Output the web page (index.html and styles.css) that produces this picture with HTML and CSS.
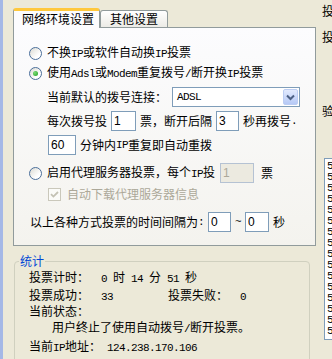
FILE: index.html
```html
<!DOCTYPE html>
<html lang="zh">
<head>
    <meta charset="UTF-8">
    <meta name="viewport" content="width=device-width, initial-scale=1.0">
    <title>投票设置</title>
    <link rel="stylesheet" href="styles.css">
</head>
<body>
    <div class="window">
        <div class="main">
            <div class="tabs">
                <div class="tab active">网络环境设置</div>
                <div class="tab">其他设置</div>
            </div>

            <div class="panel">
                <div class="row">
                    <span class="radio"></span>
                    <span class="label">不换<span class="en">IP</span>或软件自动换<span class="en">IP</span>投票</span>
                </div>
                <div class="row">
                    <span class="radio on"></span>
                    <span class="label">使用<span class="en">Adsl</span>或<span class="en">Modem</span>重复拨号<span class="en">/</span>断开换<span class="en">IP</span>投票</span>
                </div>
                <div class="row indent gap4">
                    当前默认的拨号连接：
                    <div class="combo">
                        <span class="combo-text en">ADSL</span>
                        <span class="combo-btn">
                            <svg width="9" height="7" viewBox="0 0 9 7"><path d="M1 1.5 L4.5 5 L8 1.5" fill="none" stroke="#4D6185" stroke-width="2"/></svg>
                        </span>
                    </div>
                </div>
                <div class="row indent gap4">
                    每次拨号投<input class="num w25" type="text" value="1">票，断开后隔<input class="num w23" type="text" value="3">秒再拨号<span class="en">.</span>
                </div>
                <div class="row indent gap4 minutes">
                    <input class="num w28" type="text" value="60">分钟内<span class="en">IP</span>重复即自动重拨
                </div>
                <div class="row gap8">
                    <span class="radio"></span>
                    <span class="label">启用代理服务器投票，每个<span class="en">IP</span>投</span>
                    <input class="num w34" type="text" value="1" disabled>
                    <span class="after-proxy">票</span>
                </div>
                <div class="row indent gap1 disabled">
                    <span class="check">
                        <svg width="9" height="9" viewBox="0 0 9 9"><path d="M1 4.2 L3.4 6.6 L8 2" fill="none" stroke="#C4C2B4" stroke-width="1.8"/></svg>
                    </span>
                    <span class="label">自动下载代理服务器信息</span>
                </div>
                <div class="row gap8 interval">
                    以上各种方式投票的时间间隔为<span class="en">:</span><input class="num w23" type="text" value="0"><span class="en">~</span><input class="num w24" type="text" value="0">秒
                </div>
            </div>

            <fieldset class="stats">
                <legend>统计</legend>
                <div class="stat-line first">投票计时：<span class="en">  0 </span>时<span class="en"> 14 </span>分<span class="en"> 51 </span>秒</div>
                <div class="stat-line pair"><span class="stat-cell">投票成功：<span class="en">  33</span></span><span>投票失败：<span class="en">  0</span></span></div>
                <div class="stat-line">当前状态：</div>
                <div class="stat-line message">用户终止了使用自动拨号<span class="en">/</span>断开投票。</div>
                <div class="stat-line last">当前<span class="en">IP</span>地址：<span class="en"> 124.238.170.106</span></div>
            </fieldset>
        </div>

        <div class="side">
            <div class="side-label s1">投票网址：</div>
            <div class="side-label s2">投票参数：</div>
            <div class="side-label s3">验证码：</div>
            <div class="list en">
                <div>58.61.32.4</div>
                <div>58.61.32.5</div>
                <div>58.61.32.6</div>
                <div>58.61.32.7</div>
                <div>58.61.32.8</div>
                <div>58.61.33.1</div>
                <div>58.61.33.2</div>
                <div>58.61.33.3</div>
                <div>58.61.33.4</div>
                <div>58.61.33.5</div>
                <div>58.61.33.6</div>
                <div>58.61.33.7</div>
                <div>58.61.33.8</div>
                <div>58.61.34.1</div>
                <div>58.61.34.2</div>
                <div>58.61.34.3</div>
            </div>
        </div>
    </div>
</body>
</html>
```

FILE: styles.css
```css
html, body {
    margin: 0;
    height: 100%;
}

body {
    background: #ECE9D8;
    font: 12px "Noto Sans CJK SC", sans-serif;
    color: #000;
    overflow: hidden;
}

.en {
    font-family: "Liberation Mono", monospace;
    font-size: 11px;
    letter-spacing: -0.6px;
}

.window {
    display: flex;
    height: 359px;
    border-left: 3px solid #A5B8E6;
}

.main {
    flex: none;
    width: 303px;
    padding-left: 10px;
}

/* tabs */
.tabs {
    display: flex;
    height: 19px;
    margin-top: 8px;
}

.tab {
    box-sizing: border-box;
    height: 17px;
    margin-top: 2px;
    padding: 0 9px;
    border: 1px solid #919B9C;
    border-bottom: none;
    border-radius: 3px 3px 0 0;
    background: linear-gradient(#FFFFFF, #ECEBE6);
    line-height: 15px;
    white-space: nowrap;
}

.tab.active {
    position: relative;
    z-index: 1;
    height: 20px;
    margin-top: 0;
    padding: 0 5px 0 8px;
    border-top: 3px solid #FFC83C;
    background: #FCFCFE;
}

.panel {
    box-sizing: border-box;
    height: 219px;
    padding: 15px 0 0 15px;
    border: 1px solid #919B9C;
    background: linear-gradient(#FCFCFE, #F4F3EE);
}

.row {
    display: flex;
    align-items: center;
    height: 20px;
    line-height: 16px;
    white-space: nowrap;
}

.gap1 { margin-top: 1px; }
.gap4 { margin-top: 4px; }
.gap8 { margin-top: 8px; }

.indent { padding-left: 18px; }
.interval { padding-left: 1px; }

.label { margin-left: 5px; }

.radio {
    box-sizing: border-box;
    flex: none;
    display: flex;
    align-items: center;
    justify-content: center;
    width: 13px;
    height: 13px;
    border: 1px solid #4A6E9A;
    border-radius: 50%;
    background: linear-gradient(135deg, #DCDBD3, #FFFFFF 70%);
}

.radio.on::after {
    content: "";
    width: 5px;
    height: 5px;
    border-radius: 50%;
    background: radial-gradient(circle at 35% 35%, #7BDB77, #21A121);
}

.check {
    box-sizing: border-box;
    flex: none;
    display: flex;
    align-items: center;
    justify-content: center;
    width: 13px;
    height: 13px;
    margin-left: 1px;
    border: 1px solid #CAC8BB;
    background: #FBFBF8;
}

.disabled .label {
    margin-left: 6px;
    color: #ACA899;
}

.num {
    box-sizing: border-box;
    height: 20px;
    margin: 0 4px;
    padding: 0 2px;
    border: 1px solid #7F9DB9;
    background: #fff;
    font: 12px "Liberation Sans", sans-serif;
    color: #000;
    outline: none;
}

.num:disabled {
    border-color: #B5C2D3;
    background: #ECEAE0;
    color: #ACA899;
}

.minutes .num { margin-left: 1px; }

.w23 { width: 23px; }
.w24 { width: 24px; }
.w25 { width: 25px; }
.w28 { width: 28px; }
.w34 { width: 34px; margin-left: 5px; }

.after-proxy { margin-left: 3px; }

.combo {
    box-sizing: border-box;
    display: flex;
    align-items: center;
    width: 128px;
    height: 20px;
    margin-left: 5px;
    padding: 1px;
    border: 1px solid #7F9DB9;
    background: #fff;
}

.combo-text {
    flex: 1;
    padding-left: 3px;
}

.combo-btn {
    box-sizing: border-box;
    display: flex;
    align-items: center;
    justify-content: center;
    width: 15px;
    height: 16px;
    border: 1px solid #BCCDF3;
    border-radius: 2px;
    background: linear-gradient(#E2EAFE, #B6C9F6);
}

/* statistics group */
.stats {
    box-sizing: border-box;
    width: 296px;
    height: 130px;
    min-inline-size: 0;
    margin: 8px 0 0 1px;
    padding: 0;
    border: 1px solid #D0D0BF;
    border-radius: 4px;
}

.stats legend {
    margin-left: 4px;
    padding: 0 1px;
    color: #0046D5;
    line-height: 14px;
}

.stat-line {
    height: 16px;
    padding-left: 14px;
    line-height: 16px;
    white-space: pre;
}

.stat-line.first { margin-top: 1px; }
.stat-line.pair { display: flex; margin-top: 2px; }
.stat-line.message { padding-left: 37px; }
.stat-line.last { margin-top: 3px; }

.stat-cell { width: 139px; }

/* right column, cut by the window edge */
.side {
    flex: 1;
    display: flex;
    flex-direction: column;
    padding-left: 6px;
    white-space: nowrap;
}

.side-label { line-height: 14px; }
.s1 { margin-top: 4px; }
.s2 { margin-top: 12px; }
.s3 { margin-top: 60px; }

.list {
    box-sizing: border-box;
    width: 60px;
    height: 182px;
    margin: 40px 0 0 2px;
    padding: 2px 0 0 2px;
    border: 1px solid #7F9DB9;
    background: #fff;
    line-height: 11px;
}
```
